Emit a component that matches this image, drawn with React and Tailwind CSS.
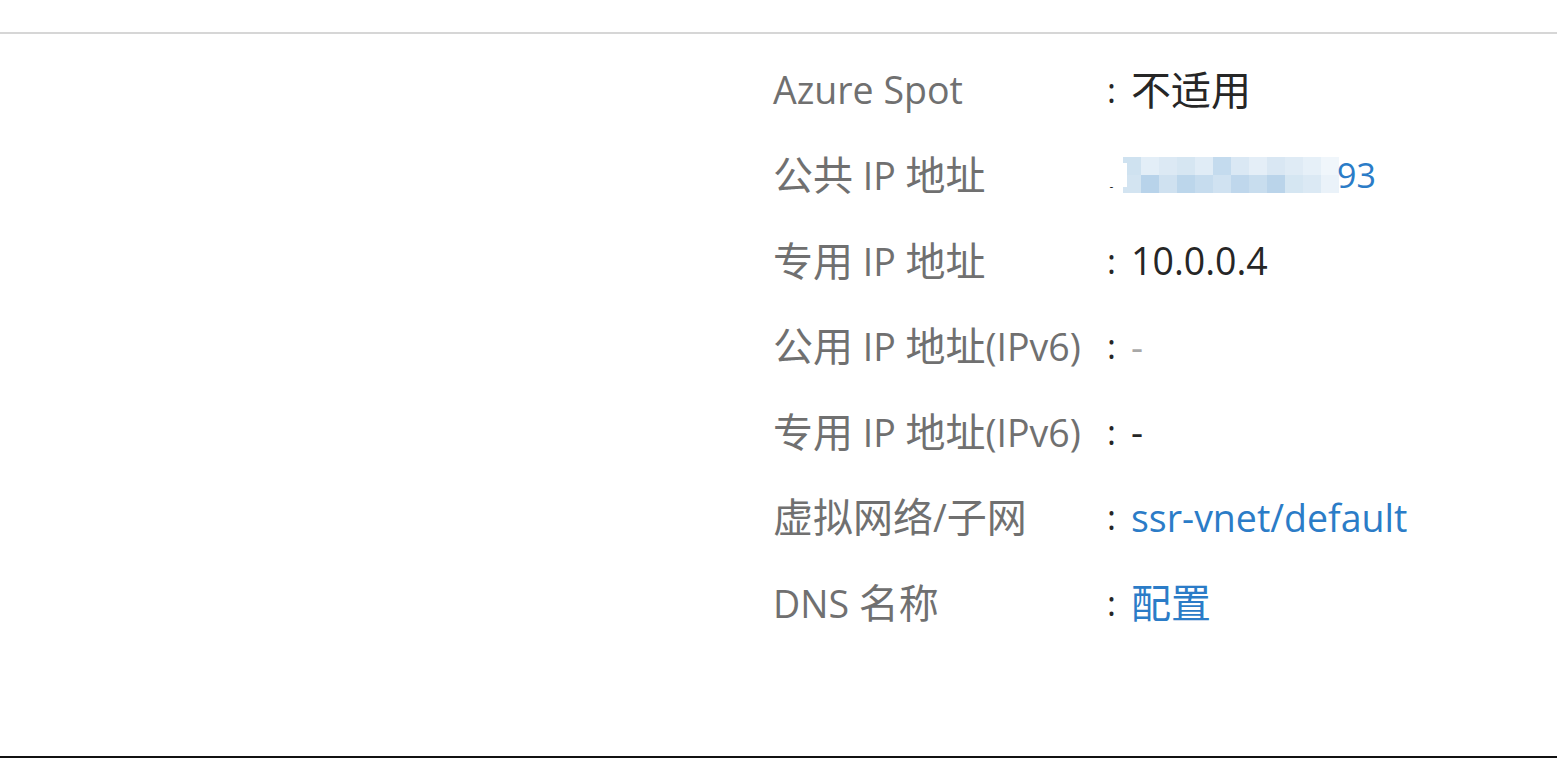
import React from 'react';

// Mosaic blocks that hide the public IP (two rows of cells)
const mosaic = [
  ['#cfe2f0', '#e3eef7', '#dce9f4', '#d6e6f2', '#e0ecf6', '#c4dbee', '#dae8f4', '#e4eef7', '#d9e7f3', '#dfebf5', '#e6f0f8', '#f0f6fb'],
  ['#d3e4f1', '#b8d3ea', '#cfe1f0', '#bcd6eb', '#c6dcee', '#d0e2f1', '#bfd7ec', '#c8ddee', '#bad4ea', '#d5e6f2', '#dbe9f4', '#eaf2f9'],
];

const rows = [
  { label: 'Azure Spot', value: '不适用', kind: 'text' },
  { label: '公共 IP 地址', value: '93', kind: 'masked' },
  { label: '专用 IP 地址', value: '10.0.0.4', kind: 'text' },
  { label: '公用 IP 地址(IPv6)', value: '-', kind: 'muted' },
  { label: '专用 IP 地址(IPv6)', value: '-', kind: 'text' },
  { label: '虚拟网络/子网', value: 'ssr-vnet/default', kind: 'link' },
  { label: 'DNS 名称', value: '配置', kind: 'link' },
];

// CJK runs are set larger than latin runs, like the portal's font mix
const Mixed = ({ text }) =>
  text.split(/([\u3400-\u9fff]+)/).filter(Boolean).map((part, i) =>
    /[\u3400-\u9fff]/.test(part) ? (
      <span key={i} className="text-[40px]">{part}</span>
    ) : (
      <span key={i} className="text-[37.5px]">{part}</span>
    )
  );

const MaskedIp = ({ tail }) => (
  <span className="relative flex items-center">
    <span className="absolute -left-[30px] top-[6px] h-[24px] w-[26px] bg-white" />
    <svg width="216" height="36" viewBox="0 0 216 36" className="-ml-[8px]">
      {mosaic.map((line, r) =>
        line.map((c, i) => (
          <rect key={`${r}-${i}`} x={i * 18} y={r * 18} width="18" height="18" fill={c} />
        ))
      )}
    </svg>
    <span className="-ml-[2px] text-[34px] text-[#2b7cc7]">{tail}</span>
  </span>
);

const valueClass = {
  text: 'text-[#262626]',
  muted: 'text-[#a8a8a8]',
  link: 'text-[#2b7cc7]',
};

export default function App() {
  return (
    <div
      className="flex h-[758px] w-full flex-col bg-white"
      style={{ fontFamily: '"Open Sans", "Noto Sans CJK SC", sans-serif' }}
    >
      <div className="h-[32px] shrink-0" />
      <div className="flex flex-1 flex-col border-t-2 border-b-2 border-t-[#d6d6d6] border-b-[#111111] pt-[13px]">
        <div className="ml-[773px] flex flex-col leading-none">
          {rows.map((row) => (
            <div key={row.label} className="flex h-[85.5px] items-center">
              <div className="w-[334px] shrink-0 whitespace-nowrap text-[#707070]">
                <Mixed text={row.label} />
              </div>
              <div className="w-[24px] shrink-0 text-[34px] text-[#262626]">:</div>
              {row.kind === 'masked' ? (
                <MaskedIp tail={row.value} />
              ) : (
                <div className={`whitespace-nowrap ${valueClass[row.kind]}`}>
                  <Mixed text={row.value} />
                </div>
              )}
            </div>
          ))}
        </div>
      </div>
    </div>
  );
}
